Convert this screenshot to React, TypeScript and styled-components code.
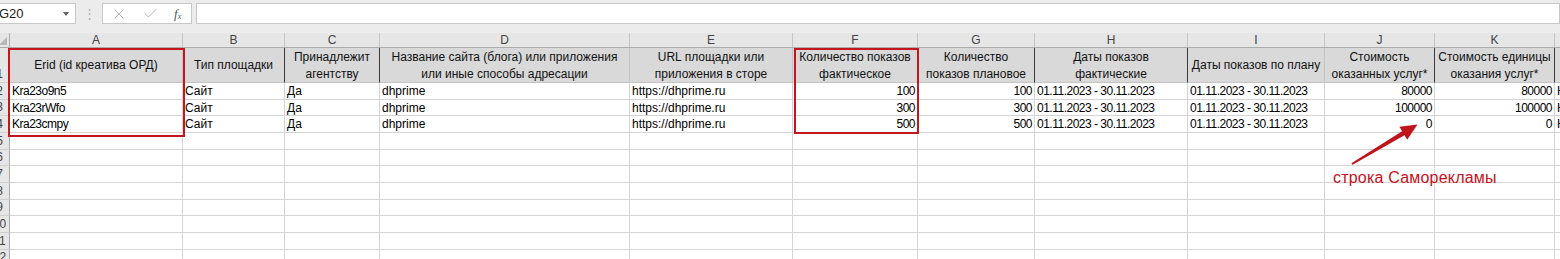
import { FC } from "react";
import styled, { createGlobalStyle } from "styled-components";
import { X, Check } from "lucide-react";

const FONT = `"Liberation Sans", Arial, sans-serif`;

type Align = "left" | "right" | "center";

interface IColumn {
  letter: string;
  width: number;
  title: string[];
  align: Align;
  edge?: boolean;
}

const columns: IColumn[] = [
  { letter: "A", width: 173, title: ["Erid (id креатива ОРД)"], align: "left" },
  { letter: "B", width: 102, title: ["Тип площадки"], align: "left", edge: true },
  { letter: "C", width: 95, title: ["Принадлежит", "агентству"], align: "left", edge: true },
  {
    letter: "D",
    width: 250,
    title: ["Название сайта (блога) или приложения", "или иные способы адресации"],
    align: "left",
  },
  { letter: "E", width: 163, title: ["URL площадки или", "приложения в сторе"], align: "left" },
  { letter: "F", width: 125, title: ["Количество показов", "фактическое"], align: "right" },
  { letter: "G", width: 117, title: ["Количество", "показов плановое"], align: "right", edge: true },
  { letter: "H", width: 153, title: ["Даты показов", "фактические"], align: "left", edge: true },
  { letter: "I", width: 137, title: ["Даты показов по плану"], align: "left" },
  { letter: "J", width: 110, title: ["Стоимость", "оказанных услуг*"], align: "right", edge: true },
  { letter: "K", width: 120, title: ["Стоимость единицы", "оказания услуг*"], align: "right", edge: true },
  { letter: "L", width: 120, title: [""], align: "left" },
];

const period = "01.11.2023 - 30.11.2023";

const rows: string[][] = [
  ["Kra23o9n5", "Сайт", "Да", "dhprime", "https://dhprime.ru", "100", "100", period, period, "80000", "80000", "К"],
  ["Kra23rWfo", "Сайт", "Да", "dhprime", "https://dhprime.ru", "300", "300", period, period, "100000", "100000", "К"],
  ["Kra23cmpy", "Сайт", "Да", "dhprime", "https://dhprime.ru", "500", "500", period, period, "0", "0", "К"],
];

// колонки, где цифры у калибри уже, чем у ариала
const tightCols = ["A", "F", "G", "H", "I", "J", "K"];

const emptyRows = [5, 6, 7, 8, 9, 10, 11, 12];

const ROW_H = 16.67;

const App: FC = () => {
  return (
    <>
      <GlobalStyle />
      <Viewport>
        <TopBar>
          <NameBox>
            <span>G20</span>
            <DropArrow />
          </NameBox>
          <Grip>⋮</Grip>
          <FuncBox>
            <X size={16} strokeWidth={1.4} color="#b4b4b4" />
            <Check size={17} strokeWidth={1.4} color="#b4b4b4" />
            <Fx>
              f<sub>x</sub>
            </Fx>
          </FuncBox>
          <FormulaInput />
        </TopBar>

        <Sheet>
          <LetterRow>
            <Corner>
              <SelectAll />
            </Corner>
            {columns.map((c) => (
              <LetterCell key={c.letter} $w={c.width}>
                {c.letter}
              </LetterCell>
            ))}
          </LetterRow>

          <Row $h={35}>
            <RowNum>1</RowNum>
            {columns.map((c) => (
              <HeadCell key={c.letter} $w={c.width} $edge={c.edge}>
                {c.title.map((line) => (
                  <HeadLine key={line}>{line}</HeadLine>
                ))}
              </HeadCell>
            ))}
          </Row>

          {rows.map((r, i) => (
            <Row key={i} $h={ROW_H}>
              <RowNum>{i + 2}</RowNum>
              {columns.map((c, j) => (
                <Cell
                  key={c.letter}
                  $w={c.width}
                  $align={c.align}
                  $tight={tightCols.includes(c.letter)}
                >
                  {r[j]}
                </Cell>
              ))}
            </Row>
          ))}

          {emptyRows.map((n) => (
            <Row key={n} $h={ROW_H}>
              <RowNum>{n}</RowNum>
              {columns.map((c) => (
                <Cell key={c.letter} $w={c.width} $align="left" />
              ))}
            </Row>
          ))}
        </Sheet>

        <RedFrame $left={8} $top={48} $width={177} $height={89} />
        <RedFrame $left={794} $top={48} $width={125} $height={86} />

        <Arrow width="90" height="60" viewBox="0 0 90 60">
          <polygon
            points="11.4,48.2 62.1,16.2 59.4,11.7 77.5,9.5 67.2,24.7 64.5,20.2 12.6,49.8"
            fill="#c0141c"
          />
        </Arrow>
        <Note>строка Саморекламы</Note>
      </Viewport>
    </>
  );
};

const GlobalStyle = createGlobalStyle`
  html, body {
    margin: 0;
    padding: 0;
    background: #ffffff;
  }
  body {
    font-family: ${FONT};
  }
`;

const Viewport = styled.div`
  position: relative;
  width: 1560px;
  height: 259px;
  overflow: hidden;
  background: #ffffff;
  font-family: ${FONT};
  color: #000;
`;

const TopBar = styled.div`
  display: flex;
  align-items: flex-start;
  height: 33px;
  padding-top: 3px;
  box-sizing: border-box;
  background: #ececec;
`;

const NameBox = styled.div`
  display: flex;
  align-items: center;
  justify-content: space-between;
  box-sizing: border-box;
  margin-left: -6px;
  width: 82px;
  height: 21px;
  padding: 0 6px 0 4px;
  background: #fff;
  border: 1px solid #c8c8c8;
  font-size: 13px;
  color: #222;
`;

const DropArrow = styled.span`
  width: 0;
  height: 0;
  border-left: 3.5px solid transparent;
  border-right: 3.5px solid transparent;
  border-top: 4px solid #606060;
`;

const Grip = styled.div`
  width: 26px;
  height: 21px;
  line-height: 21px;
  text-align: center;
  font-size: 13px;
  color: #b0b0b0;
`;

const FuncBox = styled.div`
  display: flex;
  align-items: center;
  gap: 15px;
  box-sizing: border-box;
  width: 90px;
  height: 21px;
  padding-left: 8px;
  background: #fff;
  border: 1px solid #c8c8c8;
`;

const Fx = styled.span`
  font-family: "Liberation Serif", "Times New Roman", serif;
  font-style: italic;
  font-size: 13px;
  color: #555;
  sub {
    font-size: 8px;
    vertical-align: -1px;
  }
`;

const FormulaInput = styled.div`
  flex: 1;
  margin-left: 4px;
  height: 21px;
  box-sizing: border-box;
  background: #fff;
  border: 1px solid #c8c8c8;
`;

const Sheet = styled.div`
  margin-left: -10px;
`;

const LetterRow = styled.div`
  display: flex;
  box-sizing: border-box;
  height: 15px;
  background: #e6e6e6;
  border-bottom: 1px solid #ababab;
`;

const Corner = styled.div`
  position: relative;
  flex: 0 0 20px;
  box-sizing: border-box;
  border-right: 1px solid #ababab;
`;

const SelectAll = styled.span`
  position: absolute;
  right: 2px;
  bottom: 2px;
  width: 0;
  height: 0;
  border-left: 8px solid transparent;
  border-bottom: 8px solid #b8b8b8;
`;

const LetterCell = styled.div<{ $w: number }>`
  flex: 0 0 ${(p) => p.$w}px;
  box-sizing: border-box;
  border-right: 1px solid #c6c6c6;
  text-align: center;
  font-size: 12px;
  line-height: 14px;
  color: #444;
`;

const Row = styled.div<{ $h: number }>`
  display: flex;
  height: ${(p) => p.$h}px;
`;

const RowNum = styled.div`
  display: flex;
  align-items: flex-end;
  justify-content: center;
  flex: 0 0 20px;
  box-sizing: border-box;
  background: #e6e6e6;
  border-right: 1px solid #ababab;
  border-bottom: 1px solid #d0d0d0;
  font-size: 12px;
  line-height: 15px;
  color: #444;
`;

const HeadCell = styled.div<{ $w: number; $edge?: boolean }>`
  display: flex;
  flex-direction: column;
  justify-content: center;
  align-items: center;
  flex: 0 0 ${(p) => p.$w}px;
  box-sizing: border-box;
  padding-top: 1px;
  background: #d9d9d9;
  border-right: 1px solid ${(p) => (p.$edge ? "#3c3c3c" : "#c4c4c4")};
  border-bottom: 1px solid #c4c4c4;
  overflow: hidden;
  white-space: nowrap;
  font-size: 12px;
  line-height: 17px;
  color: #111;
`;

const HeadLine = styled.div``;

const Cell = styled.div<{ $w: number; $align: Align; $tight?: boolean }>`
  flex: 0 0 ${(p) => p.$w}px;
  box-sizing: border-box;
  padding: 1px 2px 0;
  border-right: 1px solid #d4d4d4;
  border-bottom: 1px solid #d4d4d4;
  overflow: hidden;
  white-space: nowrap;
  text-align: ${(p) => p.$align};
  font-size: 12px;
  line-height: 15px;
  letter-spacing: ${(p) => (p.$tight ? "-0.5px" : "normal")};
  color: #000;
`;

const RedFrame = styled.div<{ $left: number; $top: number; $width: number; $height: number }>`
  position: absolute;
  left: ${(p) => p.$left}px;
  top: ${(p) => p.$top}px;
  width: ${(p) => p.$width}px;
  height: ${(p) => p.$height}px;
  box-sizing: border-box;
  border: 2px solid #c4161c;
  pointer-events: none;
`;

const Arrow = styled.svg`
  position: absolute;
  left: 1340px;
  top: 115px;
`;

const Note = styled.div`
  position: absolute;
  left: 1333px;
  top: 169px;
  font-size: 16px;
  line-height: 17px;
  letter-spacing: 0.2px;
  color: #c8101c;
`;

export default App;
